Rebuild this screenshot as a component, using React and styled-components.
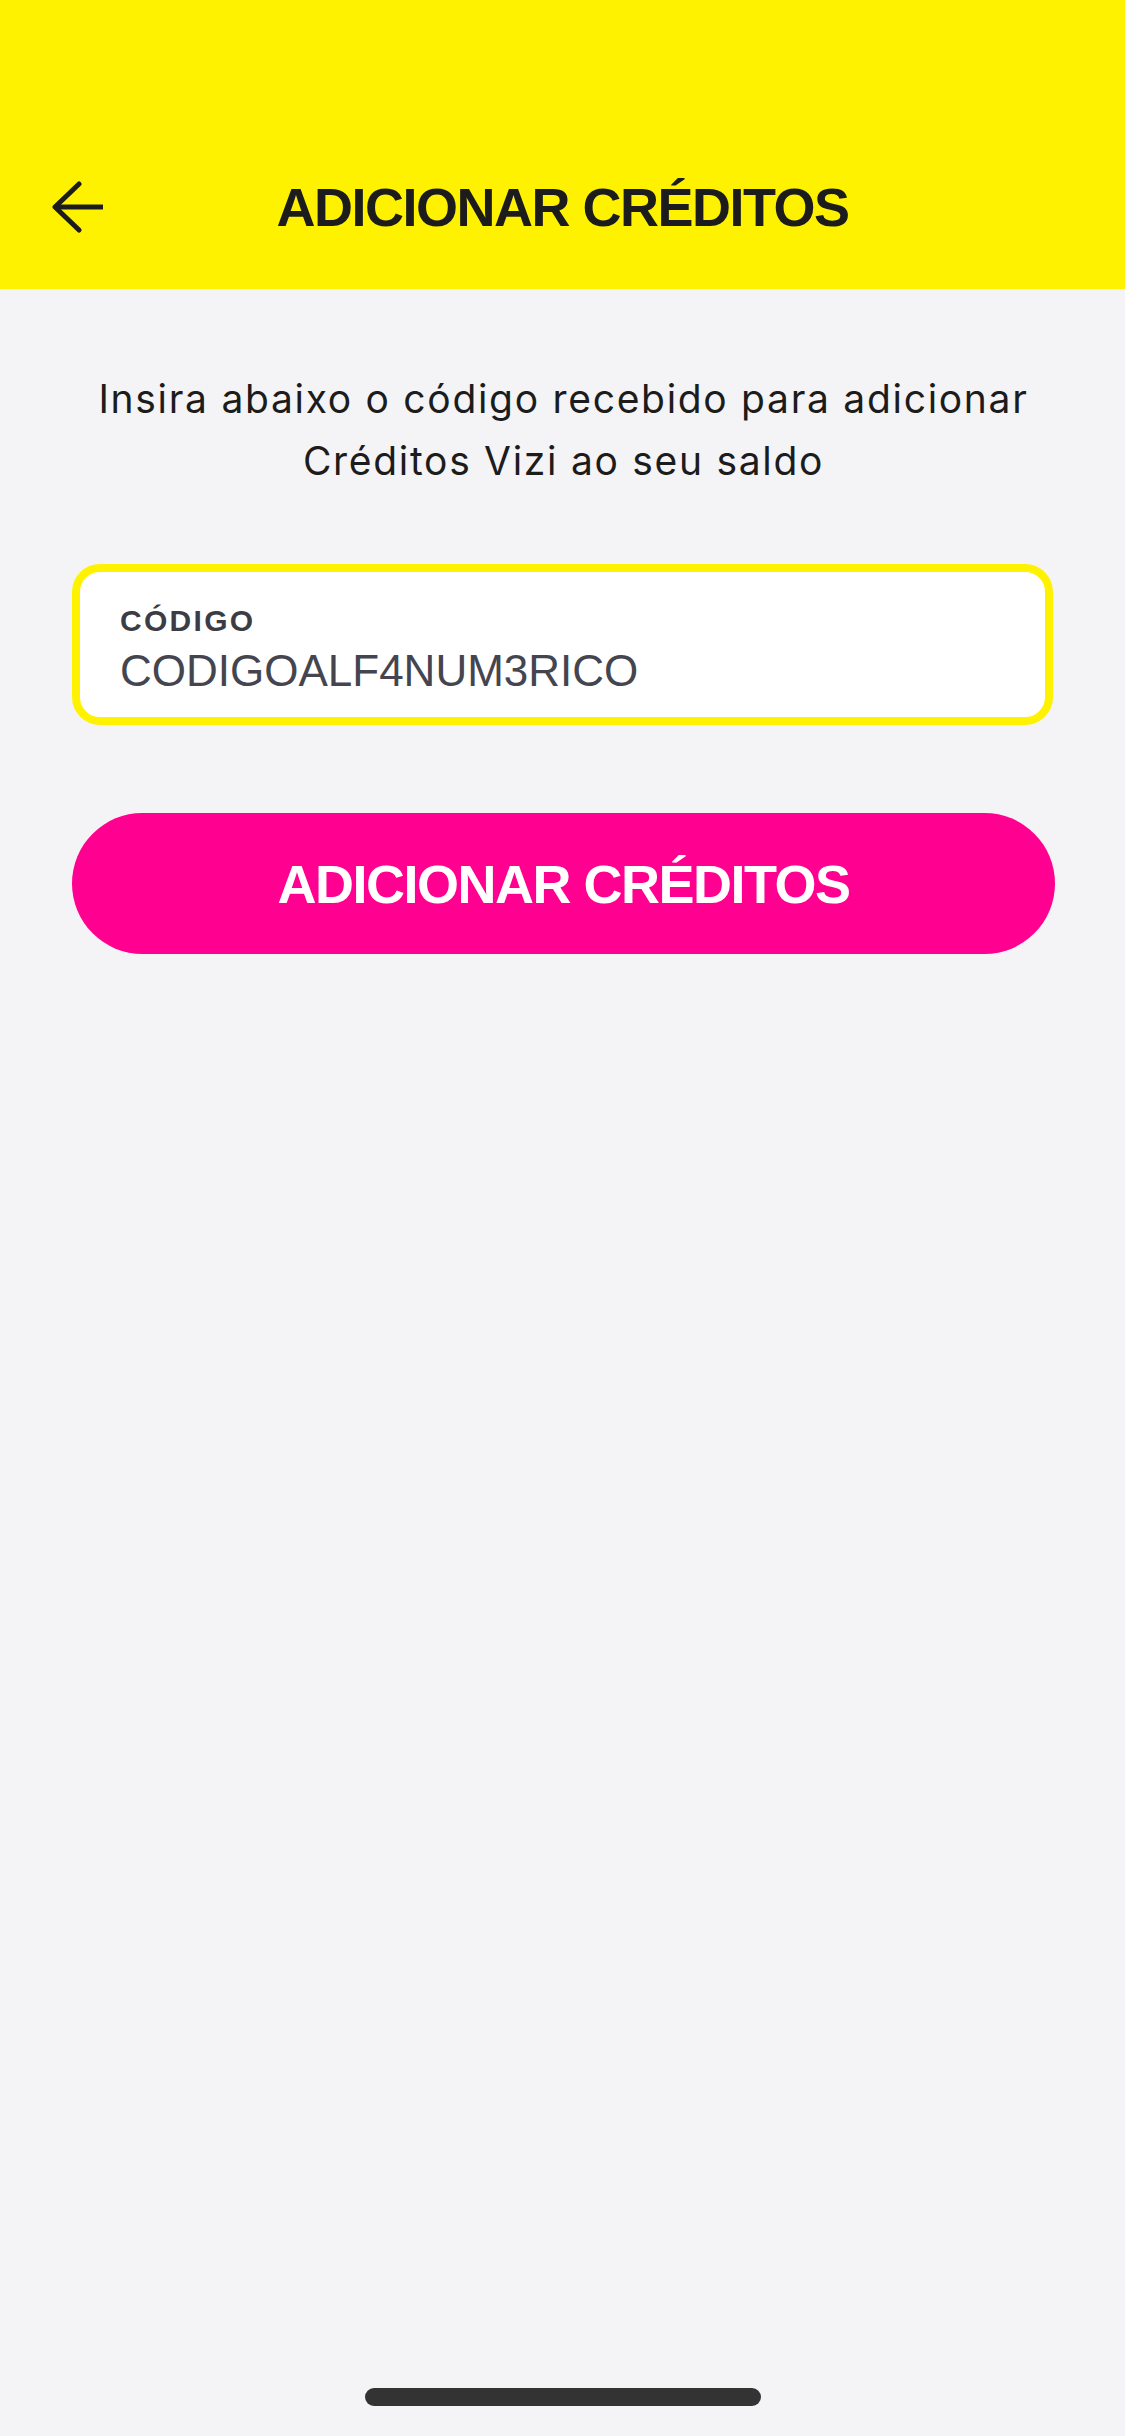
import React from "react";
import styled, { createGlobalStyle } from "styled-components";

const Global = createGlobalStyle`
  html, body { margin: 0; padding: 0; background: #f4f4f6; }
  * { box-sizing: border-box; }
`;

const Page = styled.div`
  min-height: 2436px;
  display: flex;
  flex-direction: column;
  background: #f4f4f6;
  font-family: "Liberation Sans", Arial, sans-serif;
`;

const Header = styled.header`
  height: 289px;
  background: #fff200;
  display: flex;
  flex-direction: column;
  justify-content: flex-end;
`;

const NavBar = styled.div`
  height: 164px;
  padding: 0 52px;
  display: grid;
  grid-template-columns: 1fr auto 1fr;
  align-items: center;
`;

const BackButton = styled.button`
  width: 52px;
  height: 52px;
  padding: 0;
  border: 0;
  background: none;
  display: flex;
  align-items: center;
  justify-content: center;
  color: #1c1c1c;
  justify-self: start;
`;

const Title = styled.h1`
  margin: 0;
  font-family: "Liberation Sans", Arial, sans-serif;
  font-weight: 700;
  font-size: 54px;
  letter-spacing: -1.5px;
  color: #1c1c1c;
  line-height: 1;
`;

const Content = styled.main`
  display: flex;
  flex-direction: column;
  padding: 79px 70px 0 72px;
`;

const Intro = styled.p`
  margin: 0;
  text-align: center;
  font-family: Inter, "Liberation Sans", sans-serif;
  font-size: 39px;
  line-height: 62px;
  color: #1c1c1c;
  letter-spacing: 1.7px;
`;

const Field = styled.label`
  margin-top: 72px;
  margin-right: 2px;
  height: 161px;
  border: 8px solid #fff200;
  border-radius: 28px;
  background: #ffffff;
  padding: 32px 37px 0 40px;
  display: flex;
  flex-direction: column;
  gap: 9px;
`;

const FieldLabel = styled.span`
  font-family: "Liberation Sans", Arial, sans-serif;
  font-weight: 700;
  font-size: 30px;
  letter-spacing: 2.3px;
  line-height: 33px;
  color: #3c3c45;
`;

const FieldValue = styled.span`
  font-family: "Liberation Sans", Arial, sans-serif;
  font-size: 44px;
  line-height: 49px;
  color: #45454f;
`;

const SubmitButton = styled.button`
  margin-top: 88px;
  height: 141px;
  border: 0;
  border-radius: 71px;
  background: #ff0090;
  color: #ffffff;
  font-family: "Liberation Sans", Arial, sans-serif;
  font-weight: 700;
  font-size: 54px;
  letter-spacing: -1.5px;
  padding: 0;
`;

const Spacer = styled.div`
  flex: 1;
`;

const HomeIndicator = styled.div`
  align-self: center;
  width: 396px;
  height: 18px;
  border-radius: 9px;
  background: #333333;
  margin-bottom: 30px;
`;

export default function App() {
  return (
    <Page>
      <Global />
      <Header>
        <NavBar>
          <BackButton aria-label="Voltar">
            <svg width="52" height="52" viewBox="0 0 52 52" fill="none">
              <path
                d="M51 26H5"
                stroke="currentColor"
                strokeWidth="5"
                strokeLinecap="butt"
              />
              <path
                d="M27 3L3 26L27 49"
                stroke="currentColor"
                strokeWidth="5"
                strokeLinecap="round"
                strokeLinejoin="round"
              />
            </svg>
          </BackButton>
          <Title>ADICIONAR CRÉDITOS</Title>
          <span />
        </NavBar>
      </Header>
      <Content>
        <Intro>
          Insira abaixo o código recebido para adicionar
          <br />
          Créditos Vizi ao seu saldo
        </Intro>
        <Field>
          <FieldLabel>CÓDIGO</FieldLabel>
          <FieldValue>CODIGOALF4NUM3RICO</FieldValue>
        </Field>
        <SubmitButton>ADICIONAR CRÉDITOS</SubmitButton>
      </Content>
      <Spacer />
      <HomeIndicator />
    </Page>
  );
}
